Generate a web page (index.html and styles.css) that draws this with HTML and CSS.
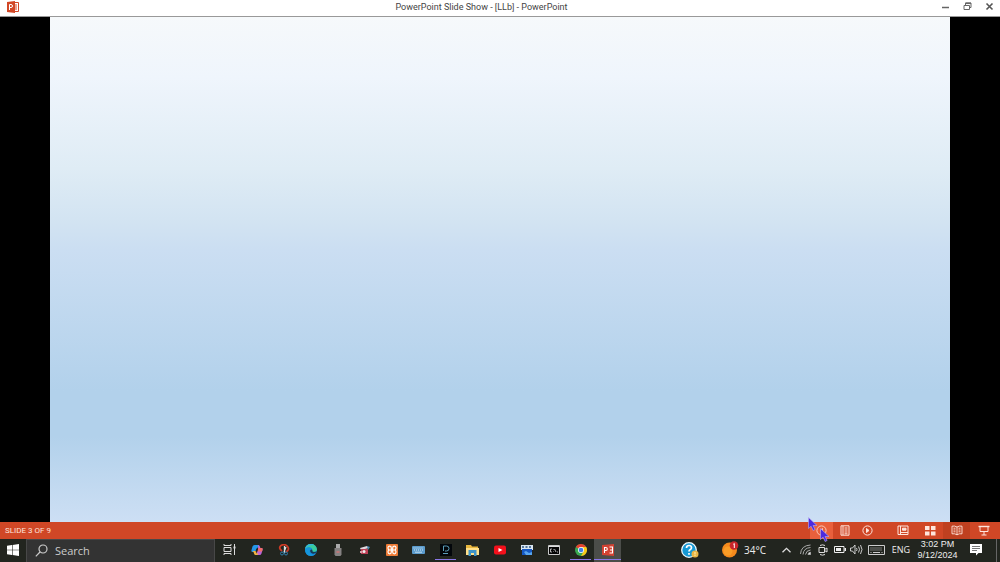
FILE: index.html
```
<!DOCTYPE html>
<html lang="en">
<head>
    <meta charset="UTF-8">
    <title>PowerPoint Slide Show - [LLb] - PowerPoint</title>
    <link rel="stylesheet" href="styles.css">
</head>
<body>
    <header class="titlebar">
        <svg class="app-logo" width="12" height="12" viewBox="0 0 12 12">
            <path d="M6 1.5h5.5v9H6z" fill="#fff" stroke="#d24726"/>
            <path d="M8 4h2M8 6h2M8 8h2" stroke="#d24726"/>
            <path d="M0 1l8-1v12l-8-1z" fill="#d24726"/>
            <path d="M2.500 9V3.500h1.500a1.500 1.500 0 0 1 0 3H2.500" fill="none" stroke="#fff"/>
        </svg>
        <h1 class="title">PowerPoint Slide Show - [LLb] - PowerPoint</h1>
        <div class="window-buttons">
            <button class="window-btn" aria-label="Minimize">
                <svg width="9" height="9" viewBox="0 0 9 9"><path d="M1 5.500h7" stroke="#666" stroke-width="1.500"/></svg>
            </button>
            <button class="window-btn" aria-label="Restore">
                <svg width="9" height="9" viewBox="0 0 9 9" fill="none" stroke="#666"><path d="M2.500 3V1h5.500v4.500H6.500M1 3.500h5.500v4H1z"/><path d="M2.500 1.300h5.500" stroke-width="1.500"/></svg>
            </button>
            <button class="window-btn" aria-label="Close">
                <svg width="9" height="9" viewBox="0 0 9 9"><path d="M1.500 1.500l6 6M7.500 1.500l-6 6" stroke="#555" stroke-width="1.600"/></svg>
            </button>
        </div>
    </header>

    <main class="stage">
        <div class="slide"></div>
    </main>

    <footer class="statusbar">
        <span class="slide-count">SLIDE 3 OF 9</span>
        <div class="slide-nav">
            <button class="nav-btn hovered" aria-label="Previous">
                <svg width="11" height="11" viewBox="0 0 11 11" fill="none" stroke="#ffc9b8"><circle cx="5.500" cy="5.500" r="4.600"/><path d="M6.500 3.500L4 5.500l2.500 2z" fill="#ffc9b8"/></svg>
                <svg class="cursor cursor-trail" width="10" height="14" viewBox="0 0 10 14"><path d="M.5.5v11l2.600-2.300 2 4.300 2-1-2-4H9z" fill="#4b2be0" stroke="#b9aef2" stroke-width=".6"/></svg>
                <svg class="cursor" width="10" height="14" viewBox="0 0 10 14"><path d="M.5.5v11l2.600-2.300 2 4.300 2-1-2-4H9z" fill="#4b2be0" stroke="#b9aef2" stroke-width=".6"/></svg>
            </button>
            <button class="nav-btn" aria-label="Menu">
                <svg width="10" height="11" viewBox="0 0 10 11" fill="none" stroke="#ffe5dc"><path d="M1 .8h8v9.400H1zM3 1v9M4.500 3h3M4.500 5h3M4.500 7h3M4.500 8.800h3"/></svg>
            </button>
            <button class="nav-btn" aria-label="Next">
                <svg width="11" height="11" viewBox="0 0 11 11" fill="none" stroke="#ffe5dc"><circle cx="5.500" cy="5.500" r="4.600"/><path d="M4.500 3.500l2.500 2-2.500 2z" fill="#ffe5dc"/></svg>
            </button>
        </div>
        <div class="views">
            <button class="view-btn" aria-label="Normal">
                <svg width="12" height="11" viewBox="0 0 12 11" fill="none" stroke="#ffe5dc"><path d="M1 1h10v8.500H1zM3.500 1v8.500M3.500 7.500H11"/><path d="M5.500 3.200h3.500v2H5.500z" fill="#ffe5dc"/></svg>
            </button>
            <button class="view-btn" aria-label="Slide sorter">
                <svg width="12" height="11" viewBox="0 0 12 11" fill="#ffe5dc"><path d="M1 1h4.500v4H1zM7 1h4.500v4H7zM1 6.500h4.500v4H1zM7 6.500h4.500v4H7z"/></svg>
            </button>
            <button class="view-btn selected" aria-label="Reading view">
                <svg width="12" height="11" viewBox="0 0 12 11" fill="none" stroke="#ffe5dc" stroke-width=".9"><path d="M6 2Q3.500.5 1 1.200v7.600q3-.5 5 1 2-1.500 5-1V1.200Q8.500.5 6 2zM6 2v8M2.500 3.200h2M2.500 5h2M2.500 6.800h2M7.500 3.200h2M7.500 5h2M7.500 6.800h2"/></svg>
            </button>
            <button class="view-btn" aria-label="Slide show">
                <svg width="12" height="11" viewBox="0 0 12 11" fill="none" stroke="#ffe5dc"><path d="M.5 1.500h11" stroke-width="1.400"/><path d="M2 2v4.500h8V2M6 6.500V10M3.500 10h5"/></svg>
            </button>
        </div>
    </footer>

    <nav class="taskbar">
        <button class="start" aria-label="Start">
            <svg width="12" height="12" viewBox="0 0 12 12" fill="#fff"><path d="M0 1.700l5-.7v4.700H0zM5.600.9L12 0v5.700H5.600zM0 6.300h5V11l-5-.7zM5.600 6.300H12V12l-6.400-.9z"/></svg>
        </button>
        <label class="search">
            <svg width="13" height="13" viewBox="0 0 13 13" fill="none" stroke="#ccc" stroke-width="1.200"><circle cx="8" cy="5" r="4"/><path d="M5 8L.8 12.300"/></svg>
            <input class="search-input" type="text" placeholder="Search" aria-label="Search">
        </label>
        <div class="apps">
            <button class="app task-view" aria-label="Task View">
                <svg width="13" height="13" viewBox="0 0 13 13" fill="none" stroke="#ddd"><path d="M1 1v1.500h7V1M1 4.500h7v4H1zM1 12v-1.500h7V12M11.500 1v11"/><path d="M10.500 3.500h2v2h-2z" fill="#ddd" stroke="none"/></svg>
            </button>
            <button class="app" aria-label="Copilot">
                <svg width="12" height="12" viewBox="0 0 12 12"><path d="M3.500 1H7q1 0 1.300 1l.4 1.500H6.500L4.800 8H1.500Q0 8 .5 6l1-3.500Q2 1 3.500 1z" fill="#2496e8"/><path d="M7 1q1.500 0 2 2l.4 1H11q1 .5.500 2l-1 3.500Q10 11 8.500 11H5l2.200-6z" fill="#bb64d8"/><path d="M1.500 7H5l.5 2.500h2L6.500 11H4.500Q3.500 11 3 9.500L2.500 8z" fill="#f3b33c"/><path d="M7.500 4H11q1 .5.500 2l-.5 1.500H6.500z" fill="#f06c6b"/><path d="M5.300 4.500h1.700L6.200 7.500H4.500z" fill="#22251f"/></svg>
            </button>
            <button class="app" aria-label="Snipping tool">
                <svg width="12" height="12" viewBox="0 0 12 12" fill="none"><path d="M4 7Q0 4 3 1.500 7-.5 9.500 2.500T8 8" stroke="#cf3b26" stroke-width="1.800"/><path d="M6.500 2v7M8 3L6 8" stroke="#ddd" stroke-width="1.300"/><circle cx="4" cy="9.500" r="1.500" stroke="#2f7fae"/><circle cx="8" cy="9.500" r="1.500" stroke="#2f7fae"/></svg>
            </button>
            <button class="app" aria-label="Edge">
                <svg width="12" height="12" viewBox="0 0 12 12"><circle cx="6" cy="6" r="6" fill="#1687d9"/><path d="M0 5Q1 0 6 0t6 5.500Q11.500 8 8.500 8q-1.500 0-1.300-1Q8 4 5 3.500 2 3 0 5z" fill="#3acb9d"/><path d="M0 5Q1 0 6 0q2 0 3.500 1.300Q5 0 0 5z" fill="#35b6dc"/><path d="M0 5Q2 2.500 5 3.500q2 .5 2 2.500-2-1-2.500 1T7 10.500q2 .5 3.500-.5Q8.500 12 6 12 0 11.500 0 5z" fill="#1596dc"/><path d="M7.300 6q-.5 2 1.700 2 2 0 3-1-1 3-4 2.800Q5 9 5.200 6.500 6 5 7.300 6z" fill="#173955"/></svg>
            </button>
            <button class="app" aria-label="USB drive">
                <svg width="10" height="12" viewBox="0 0 10 12"><path d="M3 0h4v4H3z" fill="#aaa"/><path d="M1.500 4h7v6.500L7.500 12h-5l-1-1.500z" fill="#858282"/><path d="M3.500 7h3v2h-3z" fill="#b77"/></svg>
            </button>
            <button class="app" aria-label="Recorder">
                <svg width="12" height="12" viewBox="0 0 12 12"><path d="M1 4l7-2 2 2-8 2z" fill="#e1d7df"/><path d="M2 5h7v5H2z" fill="#bf4056"/><circle cx="5" cy="7.500" r="1.500" fill="#eee"/><path d="M8 2l3 1-2 3z" fill="#4889b0"/><path d="M1 7h2v2H1z" fill="#d9a0aa"/></svg>
            </button>
            <button class="app" aria-label="XAMPP">
                <svg width="12" height="12" viewBox="0 0 12 12"><rect width="12" height="12" rx="1" fill="#ee7b35"/><path d="M3.500 6Q2 6 2 4t1.700-1.800Q5.300 2.200 5.300 4v4q0 1.800-1.600 1.800T2 8t1.500-2H8.500Q10 6 10 4T8.300 2.200Q6.700 2.200 6.700 4v4q0 1.800 1.600 1.800T10 8 8.500 6" fill="none" stroke="#fff" stroke-width="1.200"/></svg>
            </button>
            <button class="app" aria-label="On-screen keyboard">
                <svg width="13" height="8" viewBox="0 0 13 8"><rect width="13" height="8" rx="1" fill="#5c9ccd"/><path d="M1.500 2h10M2 4h9" stroke="#d4e8f5" stroke-dasharray="1 1"/><path d="M3 6.200h7" stroke="#c1dced"/></svg>
            </button>
            <button class="app running" aria-label="Desktop recorder">
                <svg width="12" height="12" viewBox="0 0 12 12"><path d="M0 0h12v12H0z" fill="#03070b"/><path d="M3.500 7V2h3a2.300 2.300 0 0 1 0 5H5M3 9.500h5" fill="none" stroke="#5b9db8"/></svg>
            </button>
            <button class="app" aria-label="File Explorer">
                <svg width="13" height="12" viewBox="0 0 13 12"><path d="M0 1h5l1 1.500h6V11H0z" fill="#e9b83e"/><path d="M0 4h13v7H0z" fill="#ffe08a"/><path d="M2.500 6h8v6H8V9H5v3H2.500z" fill="#3f94c8"/></svg>
            </button>
            <button class="app" aria-label="YouTube">
                <svg width="12" height="10" viewBox="0 0 12 10"><rect y=".5" width="12" height="9" rx="2" fill="#f4101b"/><path d="M4.500 3l4 2-4 2z" fill="#fff"/></svg>
            </button>
            <button class="app" aria-label="Run">
                <svg width="12" height="12" viewBox="0 0 12 12"><path d="M0 1h12v5H0z" fill="#d9e6f2"/><path d="M1 2h2v2H1zM4.500 2h2v2h-2zM8 2h2v2H8z" fill="#55779c"/><path d="M1 5h10v6H1z" fill="#1558c3"/><path d="M3 8l2-1 3 2 3-1v3H5z" fill="#58a5ee"/></svg>
            </button>
            <button class="app" aria-label="Command Prompt">
                <svg width="12" height="10" viewBox="0 0 12 10"><path d="M.5.500h11v9H.5z" fill="#050505" stroke="#c8c8c8"/><path d="M1 1.500h10" stroke="#ddd"/><path d="M4 4H2.500v3H4M5.500 4.500v.5M5.500 6.500V7M6.500 4L8 7M9 7h1" stroke="#ddd" fill="none" stroke-width=".8"/></svg>
            </button>
            <button class="app running" aria-label="Chrome">
                <svg width="12" height="12" viewBox="0 0 12 12"><circle cx="6" cy="6" r="6" fill="#39a852"/><path d="M6 6L.8 3A6 6 0 0 1 11.200 3z" fill="#e4402f"/><path d="M6 3h5.200A6 6 0 0 1 6 12l2.600-4.500z" fill="#fbc918"/><circle cx="6" cy="6" r="3" fill="#fff"/><circle cx="6" cy="6" r="2.300" fill="#3f7fe8"/></svg>
            </button>
            <button class="app running active" aria-label="PowerPoint">
                <svg width="12" height="12" viewBox="0 0 12 12"><path d="M0 1l12-1v12L0 11z" fill="#d24232"/><path d="M2.500 9V3.500h1.300a1.500 1.500 0 0 1 0 3H2.500M7.500 3h3v6h-3M8 6h2.500" fill="none" stroke="#fff" stroke-width="1.100"/></svg>
            </button>
        </div>

        <div class="tray">
            <button class="help" aria-label="Help">
                <svg width="18" height="16" viewBox="0 0 18 16"><circle cx="8" cy="8" r="7.300" fill="#1698d4" stroke="#eef8fc" stroke-width="1.300"/><path d="M5.500 6q0-2.500 2.500-2.500t2.500 2.200Q10.500 7 9 7.800q-1 .6-1 1.700M8 11v1.700" fill="none" stroke="#fff" stroke-width="1.700"/><circle cx="14" cy="12" r="3.500" fill="#e9b544"/><path d="M14 10v2.500M14 13v1" stroke="#fff2b8"/></svg>
            </button>
            <button class="weather">
                <svg width="17" height="17" viewBox="0 0 17 17"><circle cx="7.500" cy="9" r="7.500" fill="#f58a1c"/><circle cx="6" cy="10" r="4.500" fill="#fa9d27"/><circle cx="12" cy="4.500" r="4.300" fill="#c9252b"/><path d="M11.300 3.300l1-.8V7" fill="none" stroke="#fff"/></svg>
                <span>34°C</span>
            </button>
            <button class="tray-btn wide" aria-label="Show hidden icons">
                <svg width="9" height="6" viewBox="0 0 9 6"><path d="M.5 5.300l4-4 4 4" fill="none" stroke="#ddd" stroke-width="1.300"/></svg>
            </button>
            <button class="tray-btn" aria-label="Network">
                <svg width="11" height="11" viewBox="0 0 11 11" fill="none" stroke="#aaa"><path d="M.5 10Q1 1.500 10.500 1M3 10.500Q3.500 4 10.500 3.500M5.500 10.500Q6 6.500 10.500 6"/><path d="M8 10.500q0-2 2.500-2.200v2.200z" fill="#eee"/></svg>
            </button>
            <button class="tray-btn" aria-label="Meet Now">
                <svg width="10" height="12" viewBox="0 0 10 12" fill="none" stroke="#ddd"><path d="M1 3.500h5.500v5H1zM6.500 5.500L9 4v4L6.500 6.500M2 1.500q2.500-1.300 5 0M2 10.500q2.500 1.300 5 0"/></svg>
            </button>
            <button class="tray-btn" aria-label="Battery">
                <svg width="12" height="7" viewBox="0 0 12 7"><path d="M.5.500h9.500v6H.5z" fill="none" stroke="#eee"/><path d="M2 2h5v3H2zM10.500 2H12v3h-1.500z" fill="#eee"/></svg>
            </button>
            <button class="tray-btn" aria-label="Volume">
                <svg width="13" height="11" viewBox="0 0 13 11" fill="none" stroke="#ddd" stroke-width=".9"><path d="M.5 4h2l2.500-3v9L2.500 7h-2zM6.500 4q1 1.500 0 3M8.500 2.500q2 3 0 6M10.500 1q3 4.500 0 9"/></svg>
            </button>
            <button class="tray-btn wide" aria-label="Touch keyboard">
                <svg width="17" height="10" viewBox="0 0 17 10" fill="none" stroke="#ccc"><path d="M.5.500h16v9H.5z"/><path d="M2.500 3h12M2.500 5h12" stroke-dasharray="1 1"/><path d="M5 7.500h7M2.500 7.500h1M13.500 7.500h1"/></svg>
            </button>
            <button class="language">ENG</button>
            <button class="clock">
                <span>3:02 PM</span>
                <span>9/12/2024</span>
            </button>
            <button class="notifications" aria-label="Notifications">
                <svg width="12" height="13" viewBox="0 0 12 13"><path d="M0 1h12v9H8.500L6 12.500V10H0z" fill="#fff"/><path d="M2 3.500h8M2 5.500h8M2 7.500h5" stroke="#555" stroke-width=".8"/></svg>
            </button>
            <button class="show-desktop" aria-label="Show desktop"></button>
        </div>
    </nav>
</body>
</html>
```
FILE: styles.css
```
* {
    box-sizing: border-box;
}
body {
    margin: 0;
    height: 100vh;
    display: flex;
    flex-direction: column;
    overflow: hidden;
    background: #000;
    font-family: "Open Sans", "Noto Sans", sans-serif;
    font-size: 10px;
}
button {
    display: flex;
    align-items: center;
    justify-content: center;
    padding: 0;
    border: none;
    background: none;
    color: inherit;
    font: inherit;
}
svg {
    display: block;
    flex: none;
}

/* title bar */
.titlebar {
    display: grid;
    grid-template-columns: 1fr auto 1fr;
    align-items: center;
    height: 17px;
    padding: 0 0 3px 7px;
    background: #fff;
    border-bottom: 1px solid #999;
}
.title {
    margin: 0;
    padding-right: 44px;
    font-family: Roboto, sans-serif;
    font-size: 9px;
    font-weight: normal;
    color: #444;
}
.window-buttons {
    display: flex;
    justify-content: flex-end;
}
.window-btn {
    width: 22px;
    height: 13px;
}

/* slide */
.stage {
    flex: 1;
    display: flex;
    justify-content: center;
    background: #000;
}
.slide {
    width: 90%;
    background: linear-gradient(#f6f9fb 0%, #eff5fc 12%, #dfecf5 30%, #d3e4f2 40%, #cbdef2 46%, #b2d1eb 74%, #b2d1eb 83%, #cddff4 100%);
}

/* status bar */
.statusbar {
    display: flex;
    height: 17px;
    padding: 0 3px 0 5px;
    align-items: stretch;
    background: #d04726;
    color: #ffe5dc;
}
.slide-count {
    flex: 1;
    font-family: Roboto, sans-serif;
    font-size: 8px;
    line-height: 17px;
}
.slide-nav,
.views {
    display: flex;
}
.slide-nav {
    margin-right: 10px;
}
.nav-btn {
    position: relative;
    width: 23px;
}
.view-btn {
    width: 27px;
}
.hovered {
    background: #e9603c;
}
.selected {
    background: #bf4020;
}
.cursor {
    position: absolute;
    left: 10px;
    top: 6px;
}
.cursor-trail {
    left: -2px;
    top: -5px;
}

/* taskbar */
.taskbar {
    display: flex;
    height: 23px;
    background: #22251f;
    color: #eee;
}
.taskbar button,
.search {
    padding-bottom: 2px;
}
.start {
    width: 26px;
}
.search {
    display: flex;
    align-items: center;
    gap: 7px;
    width: 189px;
    padding-left: 8px;
    background: #333;
    border: 1px solid #484848;
    border-bottom: none;
}
.search-input {
    flex: 1;
    min-width: 0;
    padding: 0;
    border: none;
    outline: none;
    background: none;
    color: #ccc;
    font: inherit;
    font-size: 11px;
}
.search-input::placeholder {
    color: #ccc;
}
.apps {
    display: flex;
}
.app {
    width: 27px;
    position: relative;
}
.task-view {
    width: 28px;
}
.running::after {
    content: "";
    position: absolute;
    left: 3px;
    right: 3px;
    bottom: 2px;
    height: 1px;
    background: #8a78e8;
}
.active {
    background: #4b4d49;
}
.active::after {
    left: 0;
    right: 0;
}

/* tray */
.tray {
    display: flex;
    margin-left: auto;
}
.help {
    width: 26px;
    margin-right: 19px;
}
.weather {
    width: 53px;
    gap: 5px;
    justify-content: flex-start;
}
.tray-btn {
    width: 17px;
}
.wide {
    width: 22px;
}
.language {
    width: 28px;
    font-size: 9px;
}
.clock {
    flex-direction: column;
    width: 45px;
    font-family: "Liberation Sans", Arial, sans-serif;
    font-size: 9px;
    line-height: 11px;
}
.notifications {
    width: 32px;
}
.show-desktop {
    width: 4px;
    margin-left: 4px;
    border-left: 1px solid #666;
}
```
